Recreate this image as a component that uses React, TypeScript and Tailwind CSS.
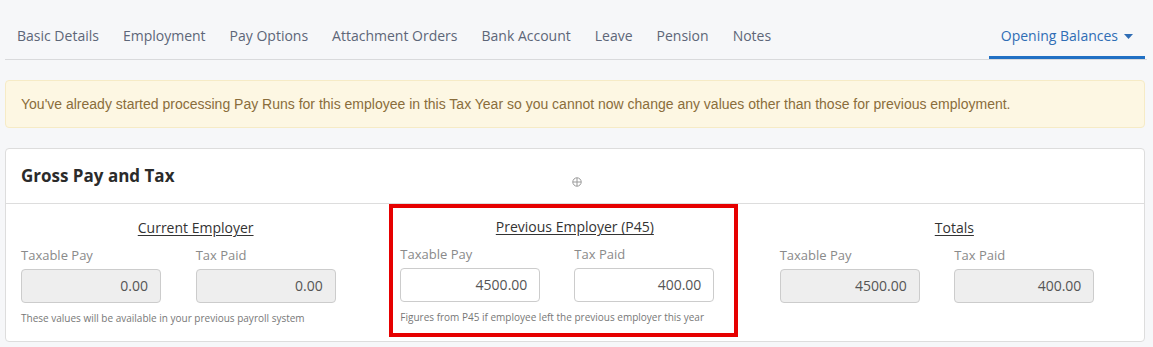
type Tab = { label: string; active?: boolean };

const tabs: Tab[] = [
  { label: "Basic Details" },
  { label: "Employment" },
  { label: "Pay Options" },
  { label: "Attachment Orders" },
  { label: "Bank Account" },
  { label: "Leave" },
  { label: "Pension" },
  { label: "Notes" },
];

type Section = {
  title: string;
  pay: string;
  tax: string;
  editable?: boolean;
  help?: string;
  highlight?: boolean;
};

const sections: Section[] = [
  {
    title: "Current Employer",
    pay: "0.00",
    tax: "0.00",
    help: "These values will be available in your previous payroll system",
  },
  {
    title: "Previous Employer (P45)",
    pay: "4500.00",
    tax: "400.00",
    editable: true,
    help: "Figures from P45 if employee left the previous employer this year",
    highlight: true,
  },
  { title: "Totals", pay: "4500.00", tax: "400.00" },
];

function Field({ label, value, editable }: { label: string; value: string; editable?: boolean }) {
  return (
    <div className="flex flex-col">
      <span className="text-[13px] leading-[18px] text-[#8a8a8a]">{label}</span>
      <div
        className={
          editable
            ? "mt-[5px] h-[34px] w-[140px] rounded-[4px] border border-[#cccccc] bg-white px-[12px] text-right text-[14px] leading-[32px] text-[#555555]"
            : "mt-[5px] h-[34px] w-[140px] rounded-[4px] border border-[#cccccc] bg-[#eeeeee] px-[12px] text-right text-[14px] leading-[32px] text-[#555555]"
        }
      >
        {value}
      </div>
    </div>
  );
}

function Column({ s }: { s: Section }) {
  return (
    <div className={s.highlight ? "pb-[4px] pl-[4px]" : ""}>
      <div
        className={
          s.highlight
            ? "h-full w-[349px] border-[4px] border-[#e60000] pl-[7px] pt-[9px]"
            : "h-full px-[15px] pt-[14px]"
        }
      >
        {/* heading stays centred on the whole column, even inside the red box */}
        <div
          className={
            s.highlight
              ? "w-[349px] text-center text-[14px] leading-[20px] text-[#333333] underline underline-offset-2"
              : "text-center text-[14px] leading-[20px] text-[#333333] underline underline-offset-2"
          }
        >
          {s.title}
        </div>
        <div className={s.highlight ? "mt-[8px] grid w-[348px] grid-cols-2" : "mt-[8px] grid grid-cols-2"}>
          <Field label="Taxable Pay" value={s.pay} editable={s.editable} />
          <Field label="Tax Paid" value={s.tax} editable={s.editable} />
        </div>
        {s.help && (
          <div className="mt-[8px] whitespace-nowrap text-[10px] leading-[14px] text-[#777777]">{s.help}</div>
        )}
      </div>
    </div>
  );
}

export default function App() {
  return (
    <div
      className="h-[347px] w-[1153px] overflow-hidden bg-[#f6f7f9] pl-[5px] pr-[8px]"
      style={{ fontFamily: '"Open Sans", "Noto Sans", sans-serif' }}
    >
      {/* tab strip */}
      <div className="-mr-[2px] flex items-end border-b border-[#d9dadc] pt-[26px]">
        {tabs.map((t) => (
          <div key={t.label} className="px-[12px] pb-[13px] text-[14px] leading-[20px] text-[#5d6678]">
            {t.label}
          </div>
        ))}
        <div className="ml-auto mr-[2px] flex items-center gap-[6px] border-b-[3px] border-[#2170c4] px-[12px] pb-[10px] text-[14px] leading-[20px] text-[#2f6db5]">
          Opening Balances
          <svg width="9" height="5" viewBox="0 0 9 5">
            <path d="M0 0h9L4.5 5z" fill="#2f6db5" />
          </svg>
        </div>
      </div>

      {/* warning */}
      <div
        className="mt-[20px] h-[48px] rounded-[4px] border border-[#f6ebc6] bg-[#fdf7e3] px-[15px] text-[14px] leading-[46px] text-[#8a6d3b]"
        style={{ fontFamily: '"Liberation Sans", Arial, sans-serif' }}
      >
        You've already started processing Pay Runs for this employee in this Tax Year so you cannot now
        change any values other than those for previous employment.
      </div>

      {/* card */}
      <div className="relative mt-[20px] rounded-[4px] border border-[#dddddd] bg-white">
        <div className="relative flex h-[55px] items-center border-b border-[#dddddd] px-[15px]">
          <span className="text-[17px] font-bold text-[#2b2b2b]">Gross Pay and Tax</span>
          <svg
            className="absolute left-[566px] top-[28px]"
            width="10"
            height="10"
            viewBox="0 0 10 10"
            fill="none"
            stroke="#9a9a9a"
            strokeWidth="1"
          >
            <circle cx="5" cy="5" r="4.2" />
            <path d="M5 0.8v8.4M0.8 5h8.4" />
          </svg>
        </div>
        <div className="grid h-[137px] grid-cols-3">
          {sections.map((s) => (
            <Column key={s.title} s={s} />
          ))}
        </div>
      </div>
    </div>
  );
}
